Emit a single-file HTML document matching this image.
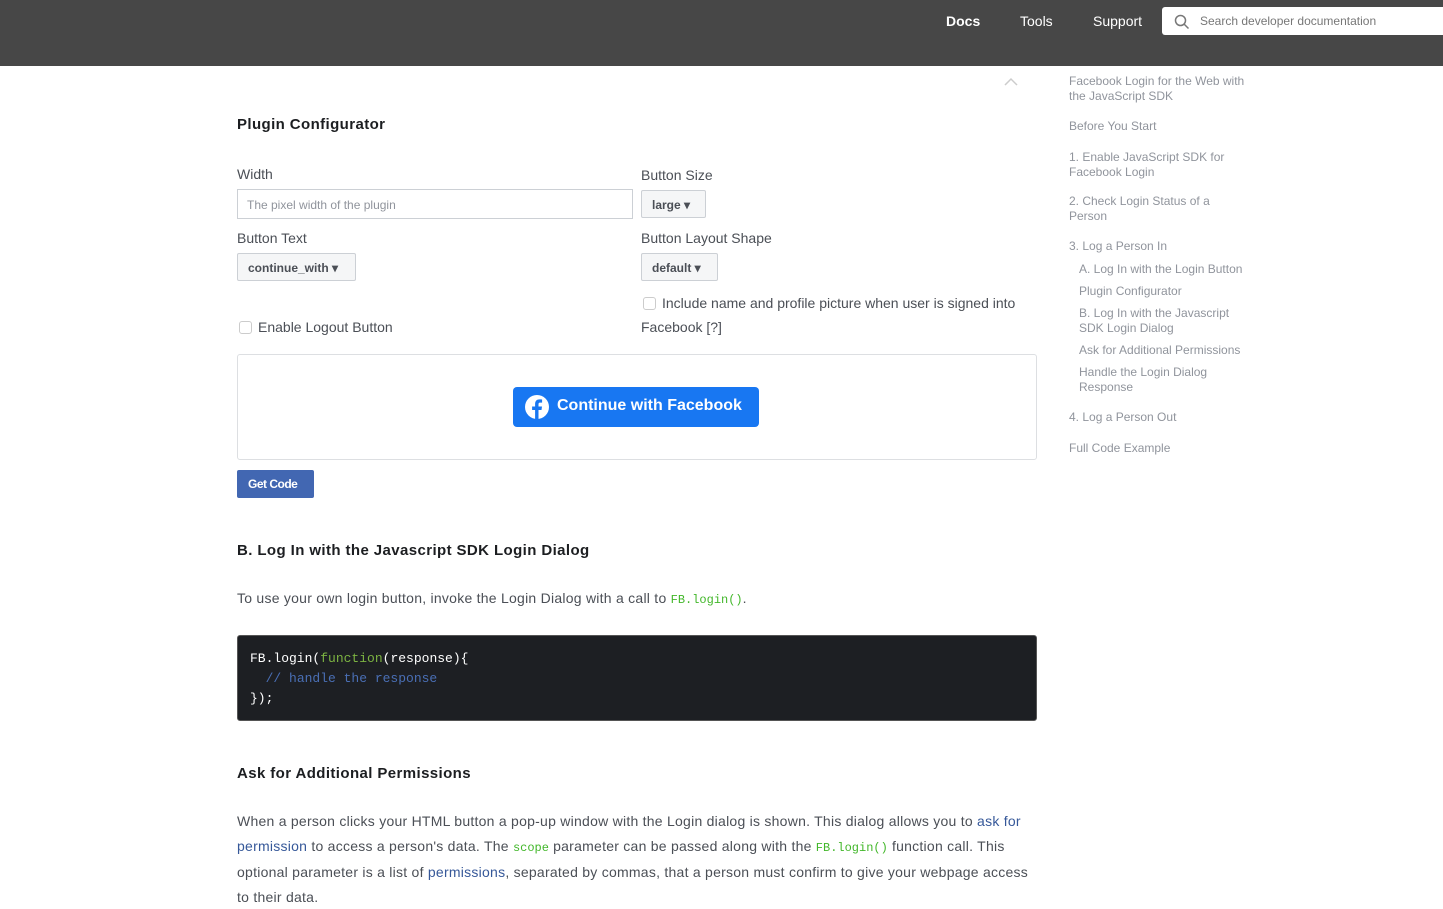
<!DOCTYPE html>
<html><head><meta charset="utf-8"><style>
*{box-sizing:border-box;margin:0;padding:0}
body{width:1443px;height:899px;overflow:hidden;background:#fff;font-family:"Liberation Sans",sans-serif;color:#1c1e21;position:relative}
.hdr{position:absolute;left:0;top:0;width:1443px;height:66px;background:#474747}
.nav{position:absolute;top:13px;color:#fff;font-size:14px}
.search{position:absolute;left:1162px;top:7px;width:290px;height:28px;background:#fff;border-radius:3px}
.search span{position:absolute;left:38px;top:7px;font-size:12px;color:#777}
.a{position:absolute;white-space:nowrap}
h3{position:absolute;font-size:15px;font-weight:bold;color:#1c1e21;letter-spacing:.4px}
.lbl{position:absolute;font-size:14px;color:#4b4f56}
.sel{position:absolute;height:28px;border:1px solid #ccd0d5;background:#f5f6f7;border-radius:2px;font-size:12px;font-weight:bold;color:#4b4f56;padding:7px 10px}
.cb{display:inline-block;width:13px;height:13px;border:1px solid #ccc;border-radius:3px;vertical-align:-2px;margin-right:6px;background:#fff}
.toc{position:absolute;left:1069px;font-size:12px;color:#90949c;line-height:15px;width:180px}
p.t{position:absolute;left:237px;font-size:14px;color:#4b4f56;line-height:24.5px;width:800px;letter-spacing:.25px}
code{font-family:"Liberation Mono",monospace;font-size:12px;color:#42b72a;letter-spacing:0}
a{color:#365899;text-decoration:none}
</style></head><body>
<div class="hdr">
<div class="nav" style="left:946px;font-weight:bold">Docs</div>
<div class="nav" style="left:1020px">Tools</div>
<div class="nav" style="left:1093px">Support</div>
<div class="search"><svg width="16" height="16" style="position:absolute;left:12px;top:7px" viewBox="0 0 16 16"><circle cx="6.5" cy="6.5" r="5" fill="none" stroke="#777" stroke-width="1.5"/><path d="M10 10l4.5 4.5" stroke="#777" stroke-width="1.5"/></svg><span>Search developer documentation</span></div>
</div>
<svg class="a" style="left:1004px;top:77px" width="14" height="9" viewBox="0 0 14 9"><path d="M1 8l6-6 6 6" fill="none" stroke="#ccc" stroke-width="1.5"/></svg>
<h3 style="left:237px;top:116px">Plugin Configurator</h3>
<div class="lbl" style="left:237px;top:166px">Width</div>
<div class="a" style="left:237px;top:189px;width:396px;height:30px;border:1px solid #ccd0d5;font-size:12px;color:#90949c;padding:8px 9px">The pixel width of the plugin</div>
<div class="lbl" style="left:641px;top:167px">Button Size</div>
<div class="sel" style="left:641px;top:190px;width:65px">large ▾</div>
<div class="lbl" style="left:237px;top:230px">Button Text</div>
<div class="sel" style="left:237px;top:253px;width:119px">continue_with ▾</div>
<div class="lbl" style="left:641px;top:230px">Button Layout Shape</div>
<div class="sel" style="left:641px;top:253px;width:77px">default ▾</div>
<div class="lbl" style="left:643px;top:295px"><span class="cb"></span>Include name and profile picture when user is signed into</div>
<div class="lbl" style="left:641px;top:319px">Facebook [?]</div>
<div class="lbl" style="left:239px;top:319px"><span class="cb"></span>Enable Logout Button</div>
<div class="a" style="left:237px;top:354px;width:800px;height:106px;border:1px solid #dddfe2;border-radius:3px"></div>
<div class="a" style="left:513px;top:387px;width:246px;height:40px;background:#1877f2;border-radius:4px;color:#fff;font-weight:bold;font-size:16px;padding:10px 0 0 44px">
<svg style="position:absolute;left:12px;top:8px" width="24" height="24" viewBox="0 0 24 24"><circle cx="12" cy="12" r="12" fill="#fff"/><path d="M13.5 24V15h3l.5-3.5h-3.5V9.3c0-1 .3-1.7 1.8-1.7h1.8V4.5c-.3 0-1.4-.1-2.6-.1-2.6 0-4.4 1.6-4.4 4.5v2.6h-3V15h3v9z" fill="#1877f2"/></svg>Continue with Facebook</div>
<div class="a" style="left:237px;top:470px;width:77px;height:28px;background:#4267b2;border-radius:2px;color:#fff;font-weight:bold;font-size:12px;padding:7px 0 0 11px;letter-spacing:-.5px">Get Code</div>
<h3 style="left:237px;top:542px">B. Log In with the Javascript SDK Login Dialog</h3>
<p class="t" style="top:586px">To use your own login button, invoke the Login Dialog with a call to <code>FB.login()</code>.</p>
<div class="a" style="left:237px;top:635px;width:800px;height:86px;background:#1d1f23;border-radius:3px;border:1px solid #555;padding:13px 12px;font-family:'Liberation Mono',monospace;font-size:13px;line-height:20px;color:#fff;white-space:pre">FB.login(<span style="color:#7cb342">function</span>(response){
  <span style="color:#4a6fb5">// handle the response</span>
});</div>
<h3 style="left:237px;top:765px">Ask for Additional Permissions</h3>
<p class="t" style="top:809px">When a person clicks your HTML button a pop-up window with the Login dialog is shown. This dialog allows you to <a>ask for permission</a> to access a person's data. The <code>scope</code> parameter can be passed along with the <code>FB.login()</code> function call. This optional parameter is a list of <a>permissions</a>, separated by commas, that a person must confirm to give your webpage access to their data.</p>
<div class="toc" style="top:74px">Facebook Login for the Web with the JavaScript SDK</div>
<div class="toc" style="top:119px">Before You Start</div>
<div class="toc" style="top:150px;width:160px">1. Enable JavaScript SDK for Facebook Login</div>
<div class="toc" style="top:194px;width:150px">2. Check Login Status of a Person</div>
<div class="toc" style="top:239px">3. Log a Person In</div>
<div class="toc" style="top:262px;left:1079px">A. Log In with the Login Button</div>
<div class="toc" style="top:284px;left:1079px">Plugin Configurator</div>
<div class="toc" style="top:306px;left:1079px;width:160px">B. Log In with the Javascript SDK Login Dialog</div>
<div class="toc" style="top:343px;left:1079px">Ask for Additional Permissions</div>
<div class="toc" style="top:365px;left:1079px;width:150px">Handle the Login Dialog Response</div>
<div class="toc" style="top:410px">4. Log a Person Out</div>
<div class="toc" style="top:441px">Full Code Example</div>
</body></html>
